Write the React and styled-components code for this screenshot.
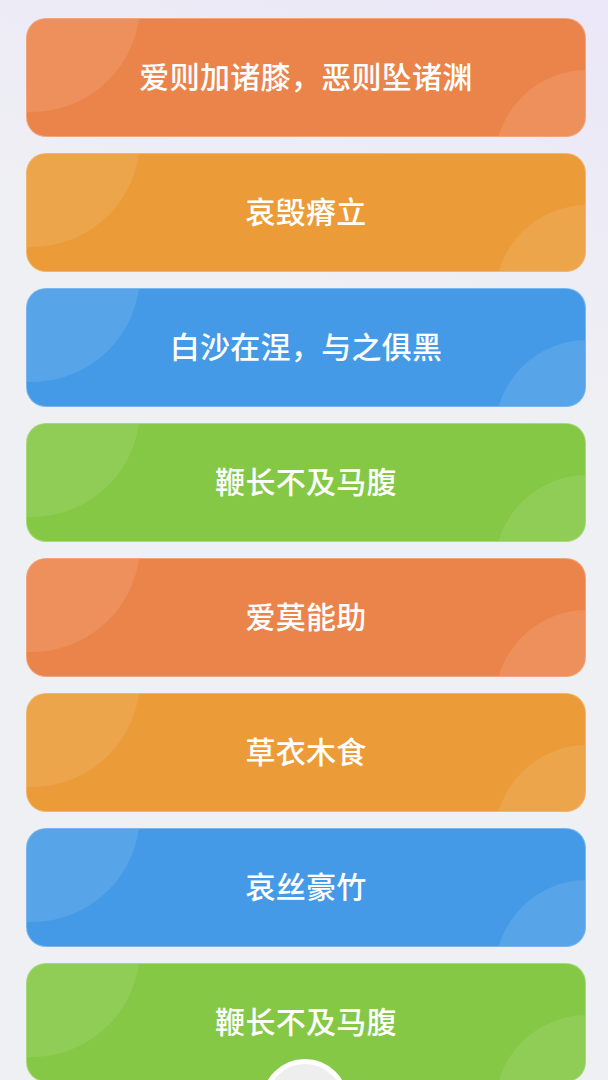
import styled, { createGlobalStyle } from "styled-components"

const GlobalStyle = createGlobalStyle`
  html, body {
    margin: 0;
    padding: 0;
  }
  body {
    font-family: "Noto Sans CJK SC", "Noto Sans", sans-serif;
    background: #eff0f3;
  }
`

const Page = styled.div`
  position: relative;
  width: 608px;
  height: 1080px;
  overflow: hidden;
  background: linear-gradient(200deg, #ebe7f8 0%, #eff0f3 35%, #eff0f3 100%);
`

const List = styled.div`
  display: flex;
  flex-direction: column;
  gap: 18px;
  padding: 19px 23px 0 27px;
`

const Card = styled.div`
  position: relative;
  height: 117px;
  border-radius: 19px;
  background: ${p => p.$bg};
  box-shadow: 0 0 0 1px ${p => p.$edge};
  overflow: hidden;
  display: flex;
  align-items: center;
  justify-content: center;

  &::before {
    content: "";
    position: absolute;
    left: -103px;
    top: -123px;
    width: 216px;
    height: 216px;
    border-radius: 50%;
    background: rgba(255, 255, 255, 0.1);
  }

  &::after {
    content: "";
    position: absolute;
    left: 468px;
    top: 51px;
    width: 184px;
    height: 184px;
    border-radius: 50%;
    background: rgba(255, 255, 255, 0.1);
  }
`

const Title = styled.span`
  position: relative;
  z-index: 1;
  color: #fff;
  font-size: 30px;
  line-height: 1;
  font-weight: 500;
  letter-spacing: 0.3px;
  margin-top: -6px;
`

const HomeButton = styled.div`
  position: absolute;
  left: 262px;
  top: 1059px;
  width: 76px;
  height: 76px;
  border-radius: 50%;
  background: #eeeeee;
  border: 5px solid #fff;
`

const palette = {
  orange: { bg: "#eb844a", edge: "#f2a57a" },
  amber: { bg: "#eb9b37", edge: "#f2b56c" },
  blue: { bg: "#449ae6", edge: "#7ab6ee" },
  green: { bg: "#84c845", edge: "#a6d97a" },
}

const items = [
  { title: "爱则加诸膝，恶则坠诸渊", tone: "orange" },
  { title: "哀毁瘠立", tone: "amber" },
  { title: "白沙在涅，与之俱黑", tone: "blue" },
  { title: "鞭长不及马腹", tone: "green" },
  { title: "爱莫能助", tone: "orange" },
  { title: "草衣木食", tone: "amber" },
  { title: "哀丝豪竹", tone: "blue" },
  { title: "鞭长不及马腹", tone: "green" },
]

const App = () => {
  return (
    <Page>
      <GlobalStyle />
      <List>
        {items.map((item, i) => (
          <Card key={i} $bg={palette[item.tone].bg} $edge={palette[item.tone].edge}>
            <Title>{item.title}</Title>
          </Card>
        ))}
      </List>
      <HomeButton />
    </Page>
  )
}

export default App
